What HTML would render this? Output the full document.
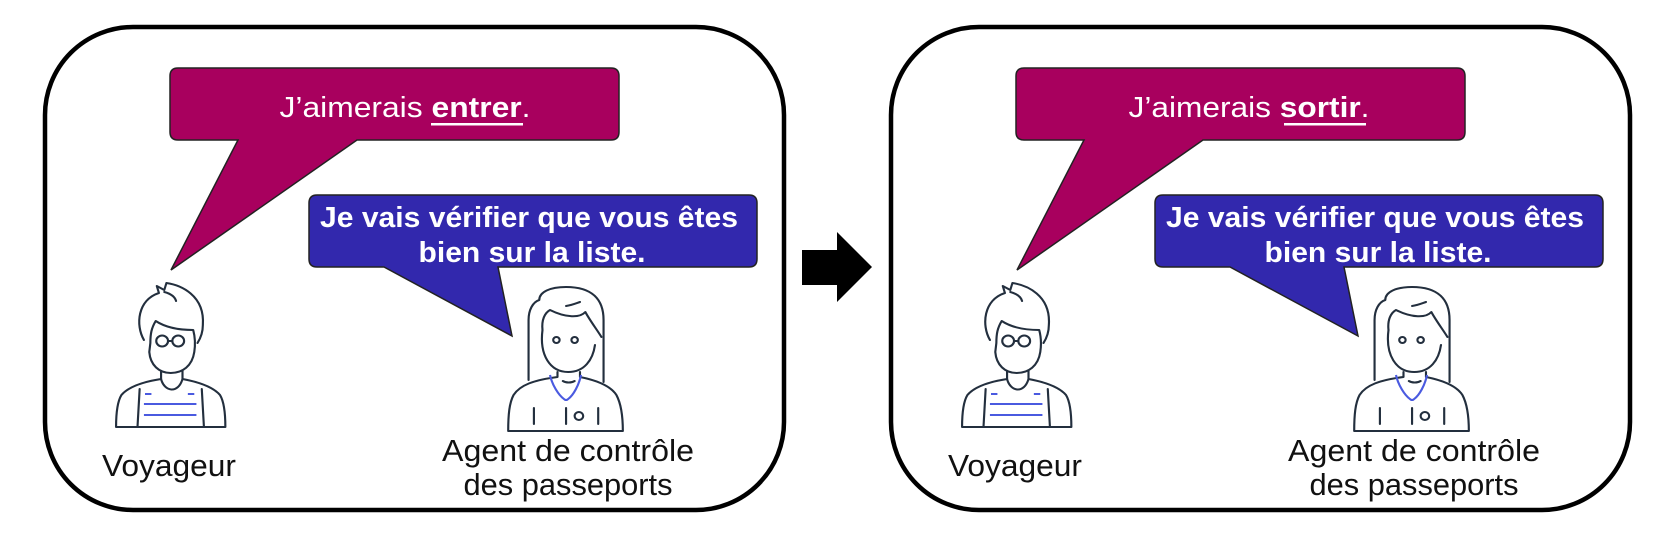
<!DOCTYPE html>
<html><head><meta charset="utf-8"><style>
html,body{margin:0;padding:0;background:#fff;width:1680px;height:534px;overflow:hidden}
text{font-family:"Liberation Sans",sans-serif}
</style></head><body>
<svg width="1680" height="534" viewBox="0 0 1680 534" xmlns="http://www.w3.org/2000/svg">
<defs>
<g id="panel">
  <rect x="45" y="27" width="739" height="483" rx="88" ry="88" fill="#fff" stroke="#000" stroke-width="4.5"/>
  <path d="M178 68 H611 Q619 68 619 76 V132 Q619 140 611 140 H357 L171 270 L238 140 H178 Q170 140 170 132 V76 Q170 68 178 68 Z" fill="#a8005e" stroke="#222" stroke-width="1.5"/>
  <path d="M317 195 H749 Q757 195 757 203 V259 Q757 267 749 267 H498 L512 336 L384 267 H317 Q309 267 309 259 V203 Q309 195 317 195 Z" fill="#3228ad" stroke="#222" stroke-width="1.5"/>
  <text x="529" y="227" font-size="29" font-weight="bold" fill="#fff" text-anchor="middle" textLength="418" lengthAdjust="spacingAndGlyphs">Je vais vérifier que vous êtes</text>
  <text x="532" y="262" font-size="29" font-weight="bold" fill="#fff" text-anchor="middle" textLength="227" lengthAdjust="spacingAndGlyphs">bien sur la liste.</text>
  <text x="169" y="476" font-size="31" fill="#111" text-anchor="middle" textLength="134" lengthAdjust="spacingAndGlyphs">Voyageur</text>
  <text x="568" y="461" font-size="31" fill="#111" text-anchor="middle" textLength="252" lengthAdjust="spacingAndGlyphs">Agent de contrôle</text>
  <text x="568" y="495" font-size="31" fill="#111" text-anchor="middle" textLength="209" lengthAdjust="spacingAndGlyphs">des passeports</text>
  <g transform="translate(100,0) scale(1.0714,1) translate(-100,0)">
  <g fill="none" stroke="#232f3e" stroke-width="2" stroke-linecap="round" stroke-linejoin="round">
    <path d="M141 340 C133 325 135 300 155 293 L153 286 L160 290 L162 283 C175 285 198 295 196 325 C196 332 194 338 191 343"/>
    <path d="M160 292 C167 294 170 297 171 301"/>
    <path d="M147 343 C147 334 148 328 152 321 C162 328 175 330 187 330 C189 338 189 345 188 352 C186 366 177 373 166 373 C155 373 147 365 146 352 Z"/>
    <circle cx="158" cy="341" r="5.5"/><circle cx="173" cy="341" r="5.5"/><path d="M163.5 341 H167.5"/>
    <path d="M157 371 V379 C145 381 128 385 120 395 C116 402 115 413 115 427 H217 C217 413 216 402 212 395 C204 385 187 381 177 379 V371"/>
    <path d="M157 379 C160 392 173 394 177 379"/>
    <path d="M137 389 L135 427 M195 389 L197 427"/>
  </g>
  <g stroke="#4a5ae0" stroke-width="2" fill="none">
    <path d="M142 394 H148 M182 394 H188 M141 404 H190 M141 415 H190"/>
  </g>
  <g fill="none" stroke="#232f3e" stroke-width="2" stroke-linecap="round" stroke-linejoin="round">
    <path d="M500 380 V320 C500 310 504 302 510 300 C510 292 520 287 535 287 C560 287 570 300 570 320 V382"/>
    <path d="M513 330 C512 320 515 313 520 310 C535 318 548 318 553 312 C557 320 564 330 568 337"/>
    <path d="M535 306 C541 305 545 303 548 302"/>
    <path d="M513 330 C510 355 520 372 537 372 C552 372 560 360 562 345"/>
    <circle cx="526" cy="340" r="3"/><circle cx="543" cy="340" r="3"/>
    <path d="M532 381 C535 383 540 383 543 381"/>
    <path d="M527 372 V377 C505 380 492 385 486 395 C482 403 481 415 481 431 H588 C588 415 586 403 582 395 C576 385 562 380 548 377 V372"/>
    <path d="M505 408 V424 M535 408 V424 M565 408 V424"/>
    <circle cx="547" cy="416" r="4"/>
  </g>
  <path d="M520 375 C522 385 528 395 533 399 Q535 401 537 399 C542 395 547 385 549 375" fill="none" stroke="#4a5ae0" stroke-width="2"/>
  </g>
</g>
</defs>
<use href="#panel"/>
<use href="#panel" x="846"/>
<text x="405" y="117" font-size="29" fill="#fff" text-anchor="middle" textLength="251" lengthAdjust="spacingAndGlyphs">J’aimerais <tspan font-weight="bold">entrer</tspan>.</text>
<rect x="431" y="123" width="92" height="2.5" fill="#fff"/>
<text x="1249" y="117" font-size="29" fill="#fff" text-anchor="middle" textLength="241" lengthAdjust="spacingAndGlyphs">J’aimerais <tspan font-weight="bold">sortir</tspan>.</text>
<rect x="1284" y="123" width="82" height="2.5" fill="#fff"/>
<path d="M802 250 H837 V232 L872 267 L837 302 V285 H802 Z" fill="#000"/>
</svg>
</body></html>
